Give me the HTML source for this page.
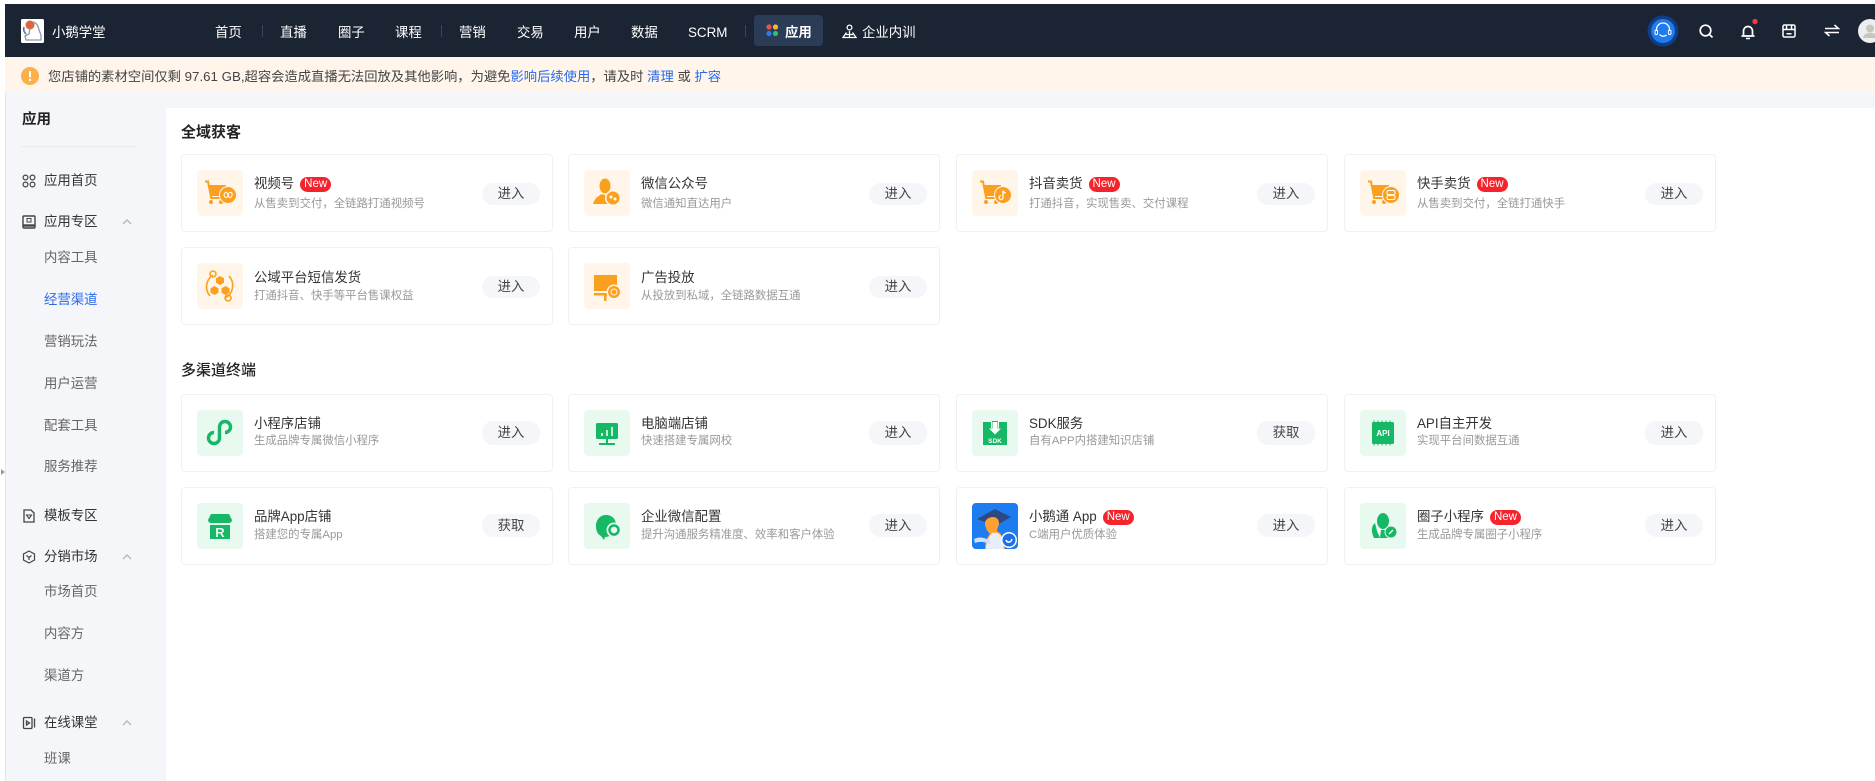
<!DOCTYPE html>
<html lang="zh-CN"><head><meta charset="utf-8"><title>应用</title>
<style>
*{box-sizing:border-box;margin:0;padding:0}
html,body{width:1875px;height:781px;overflow:hidden;background:#fff}
body{position:relative;font-family:"Liberation Sans","Noto Sans CJK SC",sans-serif;font-size:13.4px;color:#333}
.a{position:absolute;white-space:nowrap}
#nav{position:absolute;left:5px;top:4px;width:1870px;height:53px;background:#1b2432}
.n{position:absolute;top:18.5px;line-height:20px;color:#fff;white-space:nowrap;font-size:13.4px}
.sp{position:absolute;top:21px;width:1px;height:12px;background:#3a4454}
#notice{position:absolute;left:5px;top:57px;width:1870px;height:35px;background:#fff5eb}
#bg{position:absolute;left:5px;top:92px;width:1870px;height:689px;background:#f5f6fa}
#main{position:absolute;left:166px;top:108px;width:1709px;height:673px;background:#fff}
.m{position:absolute;left:44px;line-height:20px;color:#333;white-space:nowrap;margin-top:1px}
.u{color:#666}
.ic{position:absolute;left:22px;width:14px;height:14px;margin-top:1px}
.ch{position:absolute;left:122px;width:10px;height:6px;margin-top:1px}
.h{position:absolute;left:181px;font-size:15px;font-weight:700;line-height:22px;color:#222;white-space:nowrap}
.c{position:absolute;width:372px;height:78px;background:#fff;border:1px solid #f0f1f4;border-radius:4px}
.c svg.i{position:absolute;left:15px;top:15px;width:46px;height:46px}
.t{position:absolute;left:72px;top:19px;line-height:20px;color:#333;white-space:nowrap;display:flex;align-items:center}
.d{position:absolute;left:72px;top:40px;line-height:18px;font-size:11.4px;color:#999;white-space:nowrap}
.b{position:absolute;left:300px;top:28px;width:58px;height:22px;border-radius:11px;background:#f5f6f9;color:#444;text-align:center;line-height:22px;font-size:13.4px}
.o2 .t{top:20px}.o2 .d{top:39px}
.r2 .t{top:19px}.r2 .d{top:37px}.r2 .b{top:26px;height:24px;line-height:24px}
.r2.l .d{top:38px}.r2.l .b{top:26px;height:23px;line-height:23px}
.nw{display:inline-block;margin-left:6px;width:31px;height:15px;border-radius:8px;background:#f5242c;color:#fff;font-size:11.5px;line-height:15px;text-align:center}
</style></head><body>
<svg width="0" height="0" style="position:absolute">
<defs>
<symbol id="cart" viewBox="0 0 46 46">
<rect width="46" height="46" rx="4" fill="#fff5e9"/>
<path d="M8 11.5h3l3.2 16.5H26" fill="none" stroke="#fba01e" stroke-width="2"/>
<path d="M12.5 15H29v11H14.5z" fill="#fba01e"/>
<circle cx="14" cy="32" r="2" fill="#fba01e"/><circle cx="24" cy="32" r="2" fill="#fba01e"/>
<circle cx="31" cy="25" r="9" fill="#fff5e9"/><circle cx="31" cy="25" r="8" fill="#fba01e"/>
</symbol>
<symbol id="gbox" viewBox="0 0 46 46"><rect width="46" height="46" rx="4" fill="#e8f9ef"/></symbol>
<symbol id="obox" viewBox="0 0 46 46"><rect width="46" height="46" rx="4" fill="#fff5e9"/></symbol>
</defs>
</svg>

<div id="nav">
<svg style="position:absolute;left:16px;top:15px" width="23" height="24" viewBox="0 0 23 24"><rect width="23" height="24" rx="1.5" fill="#fff"/><circle cx="9" cy="6" r="4.5" fill="#d9683f"/><path d="M12 3c4 1 5 4 6 8l2 5v5H5l-1-4 4-2 1-6" fill="none" stroke="#8d99a8" stroke-width="1.3"/><path d="M3 8c-1 3 0 5 2 7" fill="none" stroke="#5a7795" stroke-width="1.6"/></svg>
<span class="n" style="left:47px">小鹅学堂</span>
<span class="n" style="left:210px">首页</span><i class="sp" style="left:257px"></i>
<span class="n" style="left:275px">直播</span>
<span class="n" style="left:333px">圈子</span>
<span class="n" style="left:390px">课程</span><i class="sp" style="left:436px"></i>
<span class="n" style="left:454px">营销</span>
<span class="n" style="left:512px">交易</span>
<span class="n" style="left:569px">用户</span>
<span class="n" style="left:626px">数据</span>
<span class="n" style="left:683px">SCRM</span><i class="sp" style="left:740px"></i>
<div style="position:absolute;left:749px;top:11px;width:69px;height:31px;border-radius:4px;background:#2b3c57"></div>
<svg style="position:absolute;left:761px;top:20px" width="13" height="13" viewBox="0 0 13 13"><circle cx="3" cy="3" r="2.6" fill="#f0503c"/><circle cx="9.500" cy="3" r="2.600" fill="#fbb52c"/><circle cx="3" cy="9.500" r="2.600" fill="#2a7bf0"/><circle cx="9.500" cy="9.500" r="2.600" fill="#25c16f"/></svg>
<span class="n" style="left:780px;font-weight:700">应用</span>
<svg style="position:absolute;left:837px;top:20px" width="15" height="15" viewBox="0 0 15 15" fill="none" stroke="#fff" stroke-width="1.3"><circle cx="7.5" cy="3.5" r="2.4"/><path d="M4.5 8.500 1 13.500h13L10.500 8.500M7.500 7v6.500M4 10.500h7"/></svg>
<span class="n" style="left:857px">企业内训</span>
<svg style="position:absolute;left:1642px;top:11px" width="32" height="32" viewBox="0 0 32 32"><circle cx="16" cy="16" r="15.500" fill="#0f3d86"/><circle cx="16" cy="16" r="12" fill="#1f7bf2"/><path d="M9.500 16v-1.500a6.500 6.500 0 0 1 13 0V16M12.500 19.500c2 2.200 5 2.200 7 .5" fill="none" stroke="#fff" stroke-width="1.300"/><rect x="8" y="15" width="2.600" height="4.500" rx="1.300" fill="none" stroke="#fff"/><rect x="21.400" y="15" width="2.600" height="4.500" rx="1.300" fill="none" stroke="#fff"/></svg>
<svg style="position:absolute;left:1693px;top:19px" width="16" height="16" viewBox="0 0 16 16" fill="none" stroke="#fff" stroke-width="1.700"><circle cx="7.500" cy="7.500" r="5.300"/><path d="m11.500 11.500 3 3"/></svg>
<svg style="position:absolute;left:1735px;top:15px" width="20" height="22" viewBox="0 0 20 22"><path d="M3.500 16.500V12a4.500 4.500 0 0 1 9 0v4.500" fill="none" stroke="#fff" stroke-width="1.700"/><path d="M1.500 17h13" stroke="#fff" stroke-width="1.800"/><path d="M6 19.500h4" stroke="#fff" stroke-width="1.500"/><circle cx="15" cy="2.500" r="2.700" fill="#f03a46"/></svg>
<svg style="position:absolute;left:1777px;top:20px" width="14" height="14" viewBox="0 0 14 14" fill="none" stroke="#fff" stroke-width="1.500"><rect x="1" y="1" width="12" height="12" rx="1.500"/><path d="M1 5.500h12M4.500 1.500v4M9.500 1.500v4M4.500 9.800h5"/></svg>
<svg style="position:absolute;left:1819px;top:20px" width="16" height="13" viewBox="0 0 16 13" fill="none" stroke="#fff" stroke-width="1.500"><path d="M1 4.500h13.500L10.500 1M15 8.500H1.500l4 3.500"/></svg>
<svg style="position:absolute;left:1853px;top:15px" width="17" height="24" viewBox="0 0 17 24"><circle cx="12" cy="12" r="12" fill="#eee"/><circle cx="12" cy="9.500" r="4" fill="#c9c5bf"/><path d="M5 19c1-4 3-5 7-5s6 1 7 5z" fill="#c9c5bf"/></svg>
</div>

<div id="notice">
<svg style="position:absolute;left:16px;top:10px" width="18" height="18" viewBox="0 0 18 18"><circle cx="9" cy="9" r="9" fill="#fbb04c"/><rect x="8" y="4" width="2" height="6.500" rx="1" fill="#fff"/><circle cx="9" cy="13" r="1.200" fill="#fff"/></svg>
<span class="a" style="left:43px;top:10px;line-height:20px;font-size:13.3px;color:#444">您店铺的素材空间仅剩 97.61 GB,超容会造成直播无法回放及其他影响，为避免<span style="color:#2a6ae9">影响后续使用</span>，请及时 <span style="color:#2a6ae9">清理</span> 或 <span style="color:#2a6ae9">扩容</span></span>
</div>

<div id="bg"></div>
<div style="position:absolute;left:5px;top:92px;width:1px;height:689px;background:#e6e7ea"></div>
<div id="main"></div>
<svg style="position:absolute;left:1px;top:469px" width="4" height="6"><path d="M0 0l4 3-4 3z" fill="#999"/></svg>

<span class="a" style="left:22px;top:109px;line-height:22px;font-size:14.500px;font-weight:700;color:#222">应用</span>
<div style="position:absolute;left:20px;top:146px;width:116px;height:1px;background:#ebecef"></div>

<svg class="ic" style="top:173px" viewBox="0 0 14 14" fill="none" stroke="#444" stroke-width="1.200"><circle cx="3.500" cy="3.500" r="2.400"/><circle cx="10.500" cy="3.500" r="2.400"/><circle cx="3.500" cy="10.500" r="2.400"/><circle cx="10.500" cy="10.500" r="2.400"/></svg>
<span class="m" style="top:170px">应用首页</span>
<svg class="ic" style="top:214px" viewBox="0 0 14 14" fill="none" stroke="#444" stroke-width="1.400"><rect x="1" y="1" width="12" height="12" rx="1"/><rect x="5" y="3.500" width="4" height="3.500" stroke-width="1"/><path d="M1 10.500h12" stroke-width="2.400"/></svg>
<span class="m" style="top:211px">应用专区</span>
<svg class="ch" style="top:218px" viewBox="0 0 10 6" fill="none" stroke="#bbb" stroke-width="1.500"><path d="M1 5l4-4 4 4"/></svg>
<span class="m u" style="top:247px">内容工具</span>
<span class="m" style="top:289px;color:#2a6ae9">经营渠道</span>
<span class="m u" style="top:331px">营销玩法</span>
<span class="m u" style="top:373px">用户运营</span>
<span class="m u" style="top:415px">配套工具</span>
<span class="m u" style="top:456px">服务推荐</span>
<svg class="ic" style="top:508px" viewBox="0 0 14 14" fill="none" stroke="#444" stroke-width="1.300"><path d="M2 1h7l3 3v9H2z"/><path d="M4.500 6h5L7 9.500z" stroke-width="1.100"/></svg>
<span class="m" style="top:505px">模板专区</span>
<svg class="ic" style="top:549px" viewBox="0 0 14 14" fill="none" stroke="#444" stroke-width="1.200"><path d="M7 1l5.500 3v6L7 13l-5.500-3V4z"/><path d="M4.500 5.500L7 7.500l2.500-2M7 7.500V10"/></svg>
<span class="m" style="top:546px">分销市场</span>
<svg class="ch" style="top:553px" viewBox="0 0 10 6" fill="none" stroke="#bbb" stroke-width="1.500"><path d="M1 5l4-4 4 4"/></svg>
<span class="m u" style="top:581px">市场首页</span>
<span class="m u" style="top:623px">内容方</span>
<span class="m u" style="top:665px">渠道方</span>
<svg class="ic" style="top:715px" viewBox="0 0 14 14" fill="none" stroke="#444" stroke-width="1.300"><rect x="1.500" y="1.500" width="8.500" height="11" rx="1"/><path d="M12.500 2.500v9M4.500 5l3 2-3 2z"/></svg>
<span class="m" style="top:712px">在线课堂</span>
<svg class="ch" style="top:719px" viewBox="0 0 10 6" fill="none" stroke="#bbb" stroke-width="1.500"><path d="M1 5l4-4 4 4"/></svg>
<span class="m u" style="top:748px">班课</span>

<div class="h" style="top:122px">全域获客</div>
<div class="h" style="top:360px;font-weight:500">多渠道终端</div>

<div class="c" style="left:181px;top:154px">
<svg class="i" viewBox="0 0 46 46"><use href="#cart"/><path d="M27 25c1-3.500 2.500-3.500 4 0s3 3.500 4 0-3-3.500-4 0-3 3.500-4 0z" fill="none" stroke="#fff" stroke-width="1.100"/></svg>
<div class="t">视频号<span class="nw">New</span></div><div class="d">从售卖到交付，全链路打通视频号</div><div class="b">进入</div></div>
<div class="c" style="left:568px;top:154px">
<svg class="i" viewBox="0 0 46 46"><use href="#obox"/><ellipse cx="21" cy="16" rx="5.500" ry="7.500" fill="#fba01e"/><path d="M9 34c1-5 5-8 9-10l3 1 4 9z" fill="#fba01e"/><circle cx="29" cy="28" r="8" fill="#fff5e9"/><circle cx="29" cy="28" r="6.500" fill="#fba01e"/><circle cx="27" cy="27" r="1.500" fill="#fff"/><circle cx="31" cy="29" r="1.500" fill="#fff"/></svg>
<div class="t">微信公众号</div><div class="d">微信通知直达用户</div><div class="b">进入</div></div>
<div class="c" style="left:956px;top:154px">
<svg class="i" viewBox="0 0 46 46"><use href="#cart"/><path d="M31 20.500v7a2 2 0 1 1-2-2M31 20.500c.5 1.500 1.500 2.500 3 2.500" fill="none" stroke="#fff" stroke-width="1.300"/></svg>
<div class="t">抖音卖货<span class="nw">New</span></div><div class="d">打通抖音，实现售卖、交付课程</div><div class="b">进入</div></div>
<div class="c" style="left:1344px;top:154px">
<svg class="i" viewBox="0 0 46 46"><use href="#cart"/><rect x="27" y="20.500" width="8" height="4" rx="1.500" fill="none" stroke="#fff"/><rect x="27" y="25.500" width="8" height="4" rx="1.500" fill="none" stroke="#fff"/></svg>
<div class="t">快手卖货<span class="nw">New</span></div><div class="d">从售卖到交付，全链打通快手</div><div class="b">进入</div></div>

<div class="c o2" style="left:181px;top:247px">
<svg class="i" viewBox="0 0 46 46"><use href="#obox"/><path d="M16 12a14 14 0 0 0-3 21M28 35a14 14 0 0 0 4-22" fill="none" stroke="#fba01e" stroke-width="1.600"/><circle cx="16" cy="11" r="3" fill="none" stroke="#fba01e" stroke-width="1.600"/><circle cx="31" cy="35" r="3" fill="none" stroke="#fba01e" stroke-width="1.600"/><g fill="#fba01e"><path d="M23 13l4 2.300v4.500L23 22l-4-2.200v-4.500z"/><path d="M17.500 23l4 2.300v4.500l-4 2.200-4-2.200v-4.500z"/><path d="M28.500 23l4 2.300v4.500l-4 2.200-4-2.200v-4.500z"/></g></svg>
<div class="t">公域平台短信发货</div><div class="d">打通抖音、快手等平台售课权益</div><div class="b">进入</div></div>
<div class="c o2" style="left:568px;top:247px">
<svg class="i" viewBox="0 0 46 46"><use href="#obox"/><rect x="10" y="12" width="23" height="16" fill="#fba01e"/><path d="M10 30h15v2.500H10z" fill="#fba01e"/><rect x="20" y="32" width="2.500" height="6" fill="#fba01e"/><circle cx="30" cy="29" r="7.500" fill="#fff5e9"/><circle cx="30" cy="29" r="6" fill="#fba01e"/><circle cx="30" cy="29" r="3" fill="none" stroke="#fff5e9"/></svg>
<div class="t">广告投放</div><div class="d">从投放到私域，全链路数据互通</div><div class="b">进入</div></div>

<div class="c r2" style="left:181px;top:394px">
<svg class="i" viewBox="0 0 46 46"><use href="#gbox"/><path d="M28 22.500a5.500 5.500 0 1 0-5.500-5.500v11a5.500 5.500 0 1 1-5.500-5.500" fill="none" stroke="#16b765" stroke-width="3.400"/></svg>
<div class="t">小程序店铺</div><div class="d">生成品牌专属微信小程序</div><div class="b">进入</div></div>
<div class="c r2" style="left:568px;top:394px">
<svg class="i" viewBox="0 0 46 46"><use href="#gbox"/><rect x="12" y="13" width="22" height="16" rx="1.500" fill="#16b765"/><path d="M18 26v-3M23 26v-6M28 26v-9" stroke="#e8f9ef" stroke-width="1.700"/><path d="M22 29h2v4h-2zM15 33h16v2H15z" fill="#16b765"/></svg>
<div class="t">电脑端店铺</div><div class="d">快速搭建专属网校</div><div class="b">进入</div></div>
<div class="c r2" style="left:956px;top:394px">
<svg class="i" viewBox="0 0 46 46"><use href="#gbox"/><path d="M11 12h8v6h8v-6h8v23H11z" fill="#16b765"/><path d="M20 11h6v8h4l-7 7-7-7h4z" fill="#16b765"/><path d="M20.500 12h5v6.500h3.500l-6 6-6-6h3.500z" fill="#fff"/><text x="23" y="33" text-anchor="middle" font-size="6.500" font-weight="700" fill="#fff" font-family="Liberation Sans">SDK</text></svg>
<div class="t">SDK服务</div><div class="d">自有APP内搭建知识店铺</div><div class="b">获取</div></div>
<div class="c r2" style="left:1344px;top:394px">
<svg class="i" viewBox="0 0 46 46"><use href="#gbox"/><rect x="12" y="12" width="22" height="22" rx="1.500" fill="#16b765"/><path d="M14 12v-1.500M18 12v-1.500M22 12v-1.500M26 12v-1.500M30 12v-1.500M14 35.500V34M18 35.500V34M22 35.500V34M26 35.500V34M30 35.500V34" stroke="#16b765"/><text x="23" y="26" text-anchor="middle" font-size="8" font-weight="700" fill="#fff" font-family="Liberation Sans">API</text></svg>
<div class="t">API自主开发</div><div class="d">实现平台间数据互通</div><div class="b">进入</div></div>

<div class="c r2 l" style="left:181px;top:487px">
<svg class="i" viewBox="0 0 46 46"><use href="#gbox"/><path d="M14 11h18l3 6a3 3 0 0 1-3 3H14a3 3 0 0 1-3-3z" fill="#16b765"/><path d="M13 22h20v14H13z" fill="#16b765"/><text x="23" y="34" text-anchor="middle" font-size="13" font-weight="700" fill="#e8f9ef" font-family="Liberation Sans">R</text></svg>
<div class="t">品牌App店铺</div><div class="d">搭建您的专属App</div><div class="b">获取</div></div>
<div class="c r2 l" style="left:568px;top:487px">
<svg class="i" viewBox="0 0 46 46"><use href="#gbox"/><path d="M22 12c6 0 10 4 10 10 0 7-5 12-11 12l-1 3-3-4c-4-2-5-6-5-10 0-6 4-11 10-11z" fill="#16b765"/><circle cx="30" cy="27" r="7.500" fill="#e8f9ef"/><circle cx="30" cy="27" r="4.500" fill="none" stroke="#16b765" stroke-width="2.500"/></svg>
<div class="t">企业微信配置</div><div class="d">提升沟通服务精准度、效率和客户体验</div><div class="b">进入</div></div>
<div class="c r2 l" style="left:956px;top:487px">
<svg class="i" viewBox="0 0 46 46"><rect width="46" height="46" rx="4" fill="#1c7cf0"/><path d="M5 16 23 6l16 8-16 9z" fill="#2d4a80"/><path d="M13 20c0-4 5-6 8-6s6 2 6 6c0 3-2 5-2 8 4 2 7 6 8 18H13c0-6 2-12 5-15-3-3-5-7-5-11z" fill="#ffa033"/><path d="M20 30c4-1 7 0 9 3l3 13H14c0-6 2-12 6-16z" fill="#e8eef8"/><path d="M2 36c6-3 10-1 16 1v4c-6-2-10-3-15-1z" fill="#cfe0fa"/><circle cx="37" cy="37" r="8" fill="#fff"/><circle cx="37" cy="37" r="6.500" fill="#1c6fe8"/><path d="M34 37c1 3 5 3 6-1" fill="none" stroke="#fff" stroke-width="1.500"/></svg>
<div class="t">小鹅通 App<span class="nw">New</span></div><div class="d">C端用户优质体验</div><div class="b">进入</div></div>
<div class="c r2 l" style="left:1344px;top:487px">
<svg class="i" viewBox="0 0 46 46"><use href="#gbox"/><ellipse cx="23" cy="18" rx="6" ry="8" fill="#16b765"/><path d="M15 20c-4 3-4 9-1 15h6l-3-7zM21 27h5l5 8H20z" fill="#16b765"/><circle cx="31" cy="29" r="6.500" fill="#e8f9ef"/><circle cx="31" cy="29" r="5.500" fill="#16b765"/><path d="M29 31l4-4" stroke="#fff" stroke-width="1.300"/></svg>
<div class="t">圈子小程序<span class="nw">New</span></div><div class="d">生成品牌专属圈子小程序</div><div class="b">进入</div></div>
</body></html>
